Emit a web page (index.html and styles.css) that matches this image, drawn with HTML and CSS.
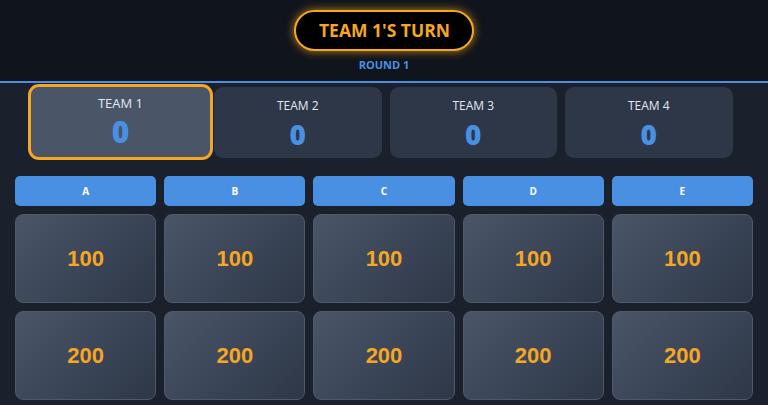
FILE: index.html
```html
<!DOCTYPE html>
<html lang="en">
<head>
<meta charset="utf-8">
<title>Jeopardy</title>
<link rel="stylesheet" href="styles.css">
</head>
<body>
<header class="top">
  <div class="turn">TEAM 1'S TURN</div>
  <div class="round">ROUND 1</div>
</header>
<section class="teams">
  <div class="team active"><div class="team-name">TEAM 1</div><div class="team-score">0</div></div>
  <div class="team"><div class="team-name">TEAM 2</div><div class="team-score">0</div></div>
  <div class="team"><div class="team-name">TEAM 3</div><div class="team-score">0</div></div>
  <div class="team"><div class="team-name">TEAM 4</div><div class="team-score">0</div></div>
</section>
<main class="board">
  <div class="cat">A</div><div class="cat">B</div><div class="cat">C</div><div class="cat">D</div><div class="cat">E</div>
  <div class="cell">100</div><div class="cell">100</div><div class="cell">100</div><div class="cell">100</div><div class="cell">100</div>
  <div class="cell">200</div><div class="cell">200</div><div class="cell">200</div><div class="cell">200</div><div class="cell">200</div>
</main>
</body>
</html>
```

FILE: styles.css
```css
html, body {
  margin: 0;
  padding: 0;
  overflow: hidden;
}
body {
  background: #1a202c;
  font-family: "Open Sans", "Noto Sans", sans-serif;
  color: #e2e8f0;
  width: 768px;
  height: 405px;
}
.top {
  background: #10141c;
  border-bottom: 2px solid #4a90e2;
  display: flex;
  flex-direction: column;
  align-items: center;
  padding-top: 10px;
  box-sizing: content-box;
  height: 71px;
}
.turn {
  height: 37px;
  padding: 0 22px 0 23px;
  border: 2px solid #f5a623;
  border-radius: 22px;
  background: #000;
  color: #f5a623;
  font-weight: 700;
  font-size: 17.5px;
  line-height: 37px;
  box-shadow: 0 0 10px rgba(245, 166, 35, 0.75);
}
.round {
  margin-top: 6px;
  color: #4a90e2;
  font-weight: 700;
  font-size: 11px;
  line-height: 15px;
}
.teams {
  display: flex;
  align-items: center;
  gap: 8px;
  padding: 0 28px;
  margin-top: 1px;
  height: 76px;
}
.team {
  width: 167.5px;
  height: 71px;
  box-sizing: border-box;
  background: #2d3748;
  border-radius: 9px;
  display: flex;
  flex-direction: column;
  align-items: center;
  padding-top: 10px;
}
.team.active {
  width: 185px;
  height: 76px;
  margin-right: -7px;
  background: #4a5568;
  border: 3px solid #f5a623;
  border-radius: 11px;
  padding-top: 7px;
}
.team-name {
  font-size: 12px;
  line-height: 17px;
  color: #e2e8f0;
}
.team-score {
  margin-top: 2px;
  font-size: 28px;
  font-weight: 800;
  line-height: 36px;
  color: #4a90e2;
}
.team.active .team-name {
  font-size: 13px;
  line-height: 19px;
}
.team.active .team-score {
  font-size: 30px;
  line-height: 36px;
  margin-top: 1px;
}
.board {
  display: grid;
  grid-template-columns: repeat(5, 1fr);
  grid-template-rows: 30px 89px 89px;
  gap: 8px;
  padding: 16px 15px 0;
}
.cat {
  background: #4a90e2;
  border-radius: 5px;
  color: #fff;
  font-weight: 700;
  font-size: 10px;
  display: flex;
  align-items: center;
  justify-content: center;
}
.cell {
  background: linear-gradient(135deg, #4a5568 0%, #2d3748 100%);
  border: 1px solid #4f596a;
  border-radius: 8px;
  box-sizing: border-box;
  display: flex;
  align-items: center;
  justify-content: center;
  font-family: "Liberation Sans", Arial, sans-serif;
  font-weight: 700;
  font-size: 22px;
  color: #f5a623;
}
```
